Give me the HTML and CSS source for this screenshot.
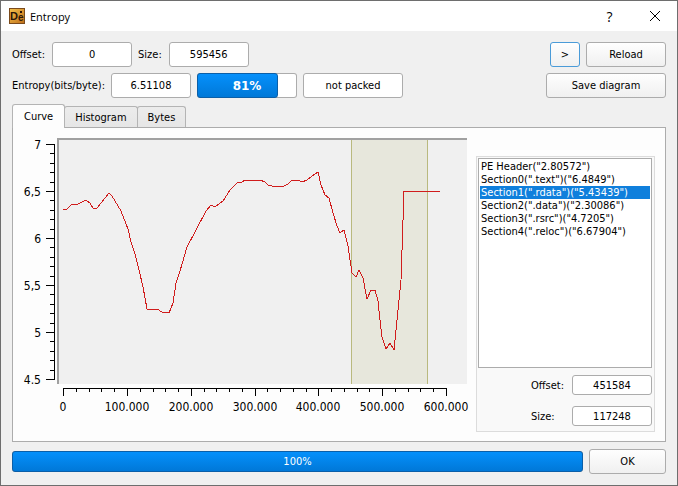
FILE: index.html
```html
<!DOCTYPE html>
<html lang="en">
<head>
    <meta charset="UTF-8">
    <meta name="viewport" content="width=device-width, initial-scale=1.0">
    <title>Entropy</title>
    <link rel="stylesheet" href="styles.css">
</head>
<body>
    <div class="window">
      <header class="titlebar">
          <svg class="app-icon" viewBox="0 0 16 16" aria-hidden="true">
              <defs>
                  <linearGradient id="gold" x1="0" y1="0" x2="1" y2="1">
                      <stop offset="0" stop-color="#f4c048"/>
                      <stop offset="1" stop-color="#c0701c"/>
                  </linearGradient>
              </defs>
              <rect width="16" height="16" fill="#7a4a1c"/>
              <rect x="1" y="1" width="14" height="14" fill="url(#gold)"/>
              <text x="1" y="12" class="icon-d">D</text>
              <text x="9" y="13" class="icon-e">e</text>
              <rect x="11" y="3" width="2" height="2" fill="#2a1608"/>
          </svg>
          <h1>Entropy</h1>
          <button class="caption-btn" aria-label="Help">?</button>
          <button class="caption-btn" aria-label="Close">
              <svg width="12" height="12" viewBox="0 0 12 12"><path d="M1 1 L11 11 M11 1 L1 11" stroke="#000" fill="none"/></svg>
          </button>
      </header>

      <main>
        <div class="row row-range">
            <label for="offset">Offset:</label>
            <input type="text" id="offset" value="0">
            <label for="size">Size:</label>
            <input type="text" id="size" value="595456">
            <span class="spacer"></span>
            <button class="btn btn-small">&gt;</button>
            <button class="btn">Reload</button>
        </div>

        <div class="row">
            <label for="entropy">Entropy(bits/byte):</label>
            <input type="text" id="entropy" value="6.51108">
            <div class="progress progress-packed" role="progressbar" aria-label="Packed" aria-valuenow="81">
                <div class="bar" style="width: 81%"></div>
                <span>81%</span>
            </div>
            <input type="text" class="status" aria-label="Status" value="not packed">
            <span class="spacer"></span>
            <button class="btn btn-wide">Save diagram</button>
        </div>

        <!-- Tabs -->
        <div class="tabs" role="tablist">
            <button class="tab active" role="tab" aria-selected="true">Curve</button>
            <button class="tab" role="tab">Histogram</button>
            <button class="tab" role="tab">Bytes</button>
        </div>

        <section class="pane">
            <svg class="chart" viewBox="0 0 458 300" role="img" aria-label="Entropy curve">
                <rect class="canvas" x="44" y="10" width="410" height="246"/>
                <g transform="translate(50 16)">
                    <!-- Selected section -->
                    <rect class="zone" x="288" y="-4" width="76" height="244"/>
                    <path class="zone-edge" d="M288.5 -4 V240 M364.5 -4 V240"/>
                    <polyline class="curve" points="0,65 4,65 9,60 15,60 23,56 27,59 30,64 34,64 46,49 49,52 58,67 65,85 68,98 72,110 76,126 80,143 84,165 94,165 99,168 106,169 110,159 113,139 117,127 124,103 133,86 143,67 148,61 152,63 156,60 160,57 167,46 174,39 179,38 182,36 197,36 202,38 205,41 213,43 221,42 225,40 229,36 235,36 239,38 244,36 249,32 255,28 258,41 262,51 266,54 270,69 274,82 277,89 281,86 285,102 289,129 293,133 296,126 300,134 304,155 308,146 312,146 315,157 317,176 319,193 323,205 327,199 331,206 334,176 338,136 341,47 377,47"/>
                </g>
                <path class="frame" d="M45 256 V11 H454"/>

                <!-- Left axis -->
                <path class="axis" transform="translate(33 16)" d="M0 0H8V235H0 M0 47H8 M0 94H8 M0 141H8 M0 188H8
                    M4 9H8 M4 19H8 M4 28H8 M4 38H8 M4 56H8 M4 66H8 M4 75H8 M4 85H8
                    M4 103H8 M4 113H8 M4 122H8 M4 132H8 M4 150H8 M4 160H8 M4 169H8 M4 179H8
                    M4 197H8 M4 207H8 M4 216H8 M4 226H8"/>
                <g class="label-y">
                    <text x="28" y="21">7</text>
                    <text x="28" y="68">6,5</text>
                    <text x="28" y="115">6</text>
                    <text x="28" y="162">5,5</text>
                    <text x="28" y="209">5</text>
                    <text x="28" y="256">4.5</text>
                </g>

                <!-- Bottom axis -->
                <path class="axis" transform="translate(50 260)" d="M0 8V0H383V8 M64 0V8 M128 0V8 M192 0V8 M255 0V8 M319 0V8
                    M13 0V4 M26 0V4 M38 0V4 M51 0V4 M77 0V4 M90 0V4 M102 0V4 M115 0V4
                    M141 0V4 M153 0V4 M166 0V4 M179 0V4 M204 0V4 M217 0V4 M230 0V4 M243 0V4
                    M268 0V4 M281 0V4 M294 0V4 M306 0V4 M332 0V4 M345 0V4 M357 0V4 M370 0V4"/>
                <g class="label-x">
                    <text x="50" y="283">0</text>
                    <text x="114" y="283">100.000</text>
                    <text x="178" y="283">200.000</text>
                    <text x="242" y="283">300.000</text>
                    <text x="305" y="283">400.000</text>
                    <text x="369" y="283">500.000</text>
                    <text x="433" y="283">600.000</text>
                </g>
            </svg>

            <div class="sections">
                <select size="6" aria-label="Sections">
                    <option>PE Header("2.80572")</option>
                    <option>Section0(".text")("6.4849")</option>
                    <option selected>Section1(".rdata")("5.43439")</option>
                    <option>Section2(".data")("2.30086")</option>
                    <option>Section3(".rsrc")("4.7205")</option>
                    <option>Section4(".reloc")("6.67904")</option>
                </select>
                <div class="field">
                    <label for="secOffset">Offset:</label>
                    <input type="text" id="secOffset" value="451584">
                </div>
                <div class="field">
                    <label for="secSize">Size:</label>
                    <input type="text" id="secSize" value="117248">
                </div>
            </div>
        </section>

        <footer>
            <div class="progress progress-total" role="progressbar" aria-label="Scan" aria-valuenow="100">
                <div class="bar" style="width: 100%"></div>
                <span>100%</span>
            </div>
            <button class="btn btn-ok">OK</button>
        </footer>
      </main>
    </div>
</body>
</html>
```
FILE: styles.css
```css
/* General Styles */
* {
    box-sizing: border-box;
}

body {
    margin: 0;
    background: #f0f0f0;
    color: #000;
}

body, button, input, select {
    font-family: "DejaVu Sans Condensed", "Noto Sans", sans-serif;
    font-size: 11px;
}

.window {
    min-height: 100vh;
    border: 1px solid #6e6e6e;
    background: #f0f0f0;
}

/* Title bar */
.titlebar {
    display: flex;
    align-items: center;
    height: 30px;
    padding: 0 0 0 8px;
    background: #fff;
}

.app-icon {
    width: 16px;
    height: 16px;
}

.icon-d, .icon-e {
    font-family: "Liberation Sans", sans-serif;
    font-weight: bold;
    fill: #2a1608;
}

.icon-d {
    font-size: 11px;
}

.icon-e {
    font-size: 10px;
}

h1 {
    flex: 1;
    margin: 0 0 0 5px;
    font-family: "Open Sans", sans-serif;
    font-size: 11px;
    font-weight: normal;
}

.caption-btn {
    width: 45px;
    height: 30px;
    padding: 0;
    border: 0;
    background: none;
    font-family: "Open Sans", sans-serif;
    font-size: 14px;
}

.caption-btn svg {
    display: block;
    margin: 0 auto;
}

/* Form rows */
main {
    padding: 11px 11px 10px;
}

.row {
    display: flex;
    align-items: center;
    gap: 6px;
    margin-bottom: 6px;
}

.row-range label {
    margin-right: 1px;
}

.spacer {
    flex: 1;
}

input {
    width: 80px;
    height: 25px;
    padding: 0;
    border: 1px solid #acacac;
    border-radius: 3px;
    background: #fff;
    text-align: center;
}

.status {
    width: 100px;
}

.btn {
    width: 80px;
    height: 25px;
    padding: 0;
    border: 1px solid #acacac;
    border-radius: 3px;
    background: linear-gradient(#fefefe, #f0f0f0);
    color: #000;
}

.btn-small {
    width: 30px;
    border-color: #4a9bd8;
}

.btn-wide {
    width: 120px;
}

/* Progress bars */
.progress {
    display: grid;
    border-radius: 3px;
    background: #fff;
    box-shadow: inset 0 0 0 1px #acacac;
    color: #fff;
}

.bar, .progress span {
    grid-area: 1 / 1;
}

.bar {
    border: 1px solid #0b5fa8;
    border-radius: 3px;
    background: linear-gradient(#0590fb, #0078d8);
}

.progress span {
    place-self: center;
}

.progress-packed {
    width: 100px;
    height: 25px;
    font-family: "DejaVu Sans", sans-serif;
    font-size: 12px;
    font-weight: bold;
}

.progress-total {
    flex: 1;
    height: 21px;
}

/* Tabs */
.tabs {
    display: flex;
    align-items: flex-end;
    height: 23px;
}

.tab {
    height: 21px;
    margin-left: -1px;
    padding: 0 10px;
    border: 1px solid #b4b4b4;
    border-bottom: 0;
    border-radius: 3px 3px 0 0;
    background: linear-gradient(#ececec, #e6e6e6);
}

.tab.active {
    z-index: 1;
    height: 24px;
    margin: 0 0 -1px;
    padding: 0 11px;
    background: #fdfdfd;
}

.pane {
    display: flex;
    align-items: flex-start;
    gap: 5px;
    padding: 0 10px 9px 0;
    border: 1px solid #acacac;
    background: #fdfdfd;
}

/* Chart */
.chart {
    flex: 1;
    min-width: 0;
    font-size: 12px;
}

.canvas {
    fill: #f0f0f0;
}

.frame {
    fill: none;
    stroke: #a0a0a0;
    stroke-width: 2;
}

.zone {
    fill: #e7e7dc;
}

.zone-edge {
    stroke: #b9b97e;
}

.curve {
    fill: none;
    stroke: #d01c1c;
    shape-rendering: crispEdges;
}

.axis {
    fill: none;
    stroke: #000;
    shape-rendering: crispEdges;
}

.label-y {
    text-anchor: end;
}

.label-x {
    text-anchor: middle;
}

/* Section list */
.sections {
    width: 179px;
    margin-top: 28px;
    padding: 1px 2px 5px 1px;
    border: 1px solid #dcdcdc;
    background: #f9f9f9;
}

select {
    display: block;
    width: 100%;
    height: 210px;
    padding: 1px;
    border: 1px solid #acacac;
    border-radius: 0;
    background: #fff;
    outline: 0;
    overflow: hidden;
}

option {
    min-height: 13px;
    height: 13px;
    padding: 0 1px;
    line-height: 13px;
}

option:checked {
    background: #0f7fdc linear-gradient(#0f7fdc, #0f7fdc);
    color: #fff;
    -webkit-text-fill-color: #fff;
}

.field {
    display: flex;
    align-items: center;
    justify-content: flex-end;
    margin-top: 7px;
}

.field + .field {
    margin-top: 11px;
}

.field label {
    width: 41px;
}

.field input {
    height: 20px;
}

/* Bottom bar */
footer {
    display: flex;
    align-items: center;
    gap: 6px;
    margin-top: 7px;
}

.btn-ok {
    width: 77px;
}
```
